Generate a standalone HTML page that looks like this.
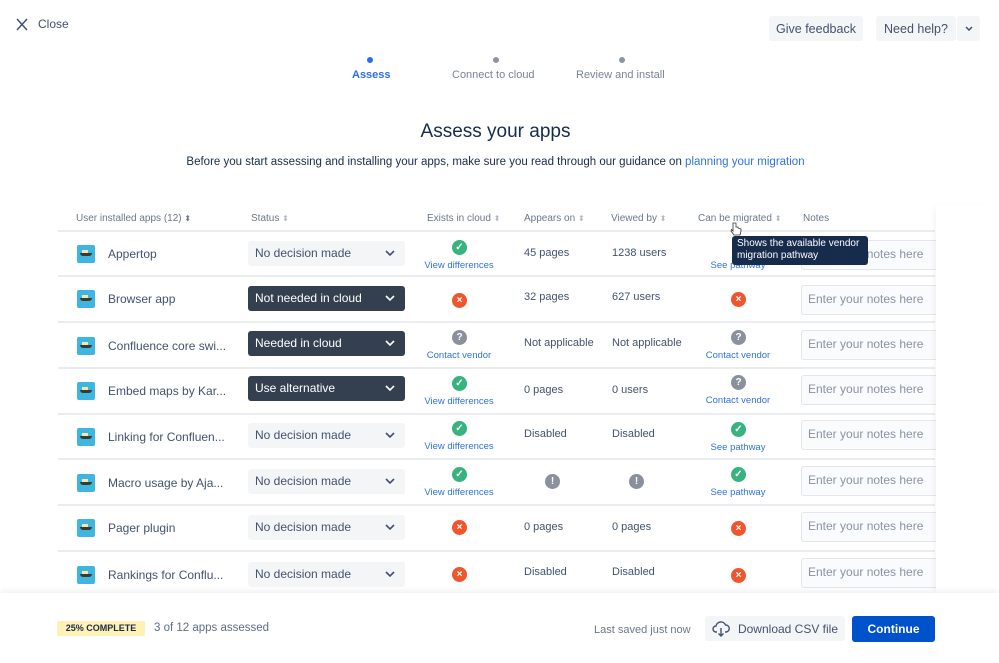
<!DOCTYPE html>
<html><head><meta charset="utf-8"><style>
*{box-sizing:border-box;margin:0;padding:0}
body{width:999px;height:663px;overflow:hidden;background:#fff;font-family:"Liberation Sans",sans-serif;color:#172b4d;position:relative}
.a{position:absolute;white-space:nowrap}
.btn{background:#f4f5f7;border-radius:3px;color:#42526e;font-size:12.5px;display:flex;align-items:center;justify-content:center}
.hd{font-size:10px;color:#6b778c;top:213px}
.t{font-size:11px;color:#42526e}
.nm{font-size:12px;color:#42526e}
.sel{position:absolute;left:248px;width:157px;height:25px;border-radius:3px;font-size:12px;padding-left:7px;line-height:25px;background:#f4f5f7;color:#42526e}
.sel.d{background:#344050;color:#fff}
.sel svg{position:absolute;right:10px;top:9px}
.ic{position:absolute;width:15px;height:15px;border-radius:50%;color:#fff;font-size:10px;font-weight:bold;text-align:center;line-height:15px}
.g{background:#36b37e}.r{background:#f0552e}.q{background:#8a909c}
.lk{font-size:9.5px;color:#2f73e0;transform:translateX(-50%)}
.note{position:absolute;left:801px;width:140px;height:30px;border:1.5px solid #e4e6ea;border-radius:3px;background:#fafbfc;font-size:12px;color:#8993a4;padding-left:6px;line-height:27px}
.line{position:absolute;left:58px;width:877px;height:2px;background:#ebecf0}
.appic{position:absolute;left:77px;width:18px;height:18px;background:#3fb6e0;border-radius:2px}
.appic:after{content:"";position:absolute;left:3px;top:8px;width:12px;height:3px;background:#3a3a30;border-radius:0 0 3px 3px}
.appic:before{content:"";position:absolute;left:5px;top:5px;width:6px;height:3px;background:#f5e6b0}
</style></head><body>
<svg class="a" style="left:16px;top:18px" width="12" height="13" viewBox="0 0 12 13"><path d="M1 1L11 12M11 1L1 12" stroke="#42526e" stroke-width="1.5"/></svg>
<div class="a" style="left:38px;top:17px;font-size:12px;color:#42526e">Close</div>
<div class="a btn" style="left:769px;top:16px;width:94px;height:25px">Give feedback</div>
<div class="a btn" style="left:876px;top:16px;width:80px;height:25px">Need help?</div>
<div class="a btn" style="left:957px;top:16px;width:23px;height:25px"><svg width="8" height="5"><path d="M1 1l3 3 3-3" stroke="#42526e" stroke-width="1.5" fill="none"/></svg></div>
<div class="a" style="left:367px;top:57px;width:6px;height:6px;border-radius:50%;background:#2d6df6"></div>
<div class="a" style="left:493px;top:57px;width:6px;height:6px;border-radius:50%;background:#8d95a3"></div>
<div class="a" style="left:619px;top:57px;width:6px;height:6px;border-radius:50%;background:#8d95a3"></div>
<div class="a" style="left:352px;top:69px;font-size:11px;color:#2d6df6;font-weight:bold">Assess</div>
<div class="a" style="left:452px;top:69px;font-size:11px;color:#7a8394">Connect to cloud</div>
<div class="a" style="left:576px;top:69px;font-size:11px;color:#7a8394">Review and install</div>
<div class="a" style="left:0;width:991px;top:121px;text-align:center;font-size:19px;color:#172b4d">Assess your apps</div>
<div class="a" style="left:0;width:991px;top:156px;text-align:center;font-size:11.5px;color:#172b4d">Before you start assessing and installing your apps, make sure you read through our guidance on <span style="color:#2f73e0">planning your migration</span></div>
<div class="a hd" style="left:76px">User installed apps (12) <span style="font-size:8px">⬍</span></div>
<div class="a hd" style="left:251px">Status <span style="font-size:8px;color:#b3bac5">⬍</span></div>
<div class="a hd" style="left:427px">Exists in cloud <span style="font-size:8px;color:#b3bac5">⬍</span></div>
<div class="a hd" style="left:524px">Appears on <span style="font-size:8px;color:#b3bac5">⬍</span></div>
<div class="a hd" style="left:611px">Viewed by <span style="font-size:8px;color:#b3bac5">⬍</span></div>
<div class="a hd" style="left:698px">Can be migrated <span style="font-size:8px;color:#b3bac5">⬍</span></div>
<div class="a hd" style="left:803px">Notes</div>
<div class="line" style="top:230px"></div>
<div class="line" style="top:275px"></div>
<div class="line" style="top:321px"></div>
<div class="line" style="top:367px"></div>
<div class="line" style="top:413px"></div>
<div class="line" style="top:458px"></div>
<div class="line" style="top:504px"></div>
<div class="line" style="top:550px"></div>

<div class="appic" style="top:245px"></div><div class="a nm" style="left:108px;top:247px">Appertop</div>
<div class="sel" style="top:241px">No decision made<svg width="10" height="6"><path d="M1 1l4 4 4-4" stroke="currentColor" stroke-width="1.6" fill="none"/></svg></div>
<div class="ic g" style="left:452px;top:240px">✓</div><div class="a lk" style="left:459px;top:260px">View differences</div>
<div class="a t" style="left:524px;top:247px">45 pages</div><div class="a t" style="left:612px;top:247px">1238 users</div>
<div class="a lk" style="left:738px;top:260px">See pathway</div>
<div class="note" style="top:240px">Enter your notes here</div>

<div class="appic" style="top:290px"></div><div class="a nm" style="left:108px;top:292px">Browser app</div>
<div class="sel d" style="top:286px">Not needed in cloud<svg width="10" height="6"><path d="M1 1l4 4 4-4" stroke="currentColor" stroke-width="1.6" fill="none"/></svg></div>
<div class="ic r" style="left:452px;top:293px">×</div>
<div class="a t" style="left:524px;top:291px">32 pages</div><div class="a t" style="left:612px;top:291px">627 users</div>
<div class="ic r" style="left:731px;top:292px">×</div>
<div class="note" style="top:285px">Enter your notes here</div>

<div class="appic" style="top:337px"></div><div class="a nm" style="left:108px;top:339px">Confluence core swi...</div>
<div class="sel d" style="top:331px">Needed in cloud<svg width="10" height="6"><path d="M1 1l4 4 4-4" stroke="currentColor" stroke-width="1.6" fill="none"/></svg></div>
<div class="ic q" style="left:452px;top:330px">?</div><div class="a lk" style="left:459px;top:350px">Contact vendor</div>
<div class="a t" style="left:524px;top:337px">Not applicable</div><div class="a t" style="left:612px;top:337px">Not applicable</div>
<div class="ic q" style="left:731px;top:330px">?</div><div class="a lk" style="left:738px;top:350px">Contact vendor</div>
<div class="note" style="top:330px">Enter your notes here</div>

<div class="appic" style="top:382px"></div><div class="a nm" style="left:108px;top:384px">Embed maps by Kar...</div>
<div class="sel d" style="top:376px">Use alternative<svg width="10" height="6"><path d="M1 1l4 4 4-4" stroke="currentColor" stroke-width="1.6" fill="none"/></svg></div>
<div class="ic g" style="left:452px;top:376px">✓</div><div class="a lk" style="left:459px;top:396px">View differences</div>
<div class="a t" style="left:524px;top:384px">0 pages</div><div class="a t" style="left:612px;top:384px">0 users</div>
<div class="ic q" style="left:731px;top:375px">?</div><div class="a lk" style="left:738px;top:395px">Contact vendor</div>
<div class="note" style="top:375px">Enter your notes here</div>

<div class="appic" style="top:428px"></div><div class="a nm" style="left:108px;top:430px">Linking for Confluen...</div>
<div class="sel" style="top:423px">No decision made<svg width="10" height="6"><path d="M1 1l4 4 4-4" stroke="currentColor" stroke-width="1.6" fill="none"/></svg></div>
<div class="ic g" style="left:452px;top:421px">✓</div><div class="a lk" style="left:459px;top:441px">View differences</div>
<div class="a t" style="left:524px;top:428px">Disabled</div><div class="a t" style="left:612px;top:428px">Disabled</div>
<div class="ic g" style="left:731px;top:422px">✓</div><div class="a lk" style="left:738px;top:442px">See pathway</div>
<div class="note" style="top:420px">Enter your notes here</div>

<div class="appic" style="top:474px"></div><div class="a nm" style="left:108px;top:476px">Macro usage by Aja...</div>
<div class="sel" style="top:469px">No decision made<svg width="10" height="6"><path d="M1 1l4 4 4-4" stroke="currentColor" stroke-width="1.6" fill="none"/></svg></div>
<div class="ic g" style="left:452px;top:467px">✓</div><div class="a lk" style="left:459px;top:487px">View differences</div>
<div class="ic q" style="left:545px;top:474px">!</div><div class="ic q" style="left:629px;top:474px">!</div>
<div class="ic g" style="left:731px;top:467px">✓</div><div class="a lk" style="left:738px;top:487px">See pathway</div>
<div class="note" style="top:466px">Enter your notes here</div>

<div class="appic" style="top:519px"></div><div class="a nm" style="left:108px;top:521px">Pager plugin</div>
<div class="sel" style="top:515px">No decision made<svg width="10" height="6"><path d="M1 1l4 4 4-4" stroke="currentColor" stroke-width="1.6" fill="none"/></svg></div>
<div class="ic r" style="left:452px;top:520px">×</div>
<div class="a t" style="left:524px;top:521px">0 pages</div><div class="a t" style="left:612px;top:521px">0 pages</div>
<div class="ic r" style="left:731px;top:521px">×</div>
<div class="note" style="top:512px">Enter your notes here</div>

<div class="appic" style="top:566px"></div><div class="a nm" style="left:108px;top:568px">Rankings for Conflu...</div>
<div class="sel" style="top:562px">No decision made<svg width="10" height="6"><path d="M1 1l4 4 4-4" stroke="currentColor" stroke-width="1.6" fill="none"/></svg></div>
<div class="ic r" style="left:452px;top:567px">×</div>
<div class="a t" style="left:524px;top:566px">Disabled</div><div class="a t" style="left:612px;top:566px">Disabled</div>
<div class="ic r" style="left:731px;top:568px">×</div>
<div class="note" style="top:558px">Enter your notes here</div>

<div class="a" style="left:936px;top:205px;width:63px;height:390px;background:#fff;box-shadow:-4px 0 6px -3px rgba(0,0,0,.06);z-index:5"></div>

<div class="a" style="left:732px;top:236px;width:136px;height:29px;background:#172b4d;border-radius:3px;color:#fff;font-size:10px;line-height:12px;padding:2px 5px;white-space:normal;z-index:6">Shows the available vendor migration pathway</div>
<svg class="a" style="left:730px;top:222px;z-index:7" width="12" height="14" viewBox="0 0 12 14"><path d="M3 1v8l-1.5-1.5L1 9l3 4h6l1-4V7L8 6V5L6 5V1z" fill="#fff" stroke="#333" stroke-width="0.8"/></svg>

<div class="a" style="left:0;top:593px;width:999px;height:70px;background:#fff;box-shadow:0 -3px 5px rgba(0,0,0,.05);z-index:8"></div>
<div class="a" style="left:57px;top:621px;width:88px;height:15px;background:#fff0b3;border-radius:2px;font-size:9px;font-weight:bold;color:#172b4d;text-align:center;line-height:15px;z-index:9">25% COMPLETE</div>
<div class="a" style="left:154px;top:622px;font-size:11.5px;color:#5e6c84;z-index:9">3 of 12 apps assessed</div>
<div class="a" style="left:594px;top:624px;font-size:11px;color:#6b778c;z-index:9">Last saved just now</div>
<div class="a btn" style="left:705px;top:616px;width:140px;height:25px;font-size:12px;z-index:9"><svg width="18" height="16" viewBox="0 0 18 16" style="margin-right:8px"><path d="M5 11H4a3 3 0 010-6 5 5 0 019.5-1A3.5 3.5 0 0114 11h-1M9 7v8M6.5 12.5L9 15l2.5-2.5" stroke="#42526e" stroke-width="1.4" fill="none"/></svg>Download CSV file</div>
<div class="a" style="left:852px;top:616px;width:83px;height:26px;background:#0052cc;border-radius:3px;color:#fff;font-size:12px;font-weight:bold;text-align:center;line-height:26px;z-index:9">Continue</div>
</body></html>
